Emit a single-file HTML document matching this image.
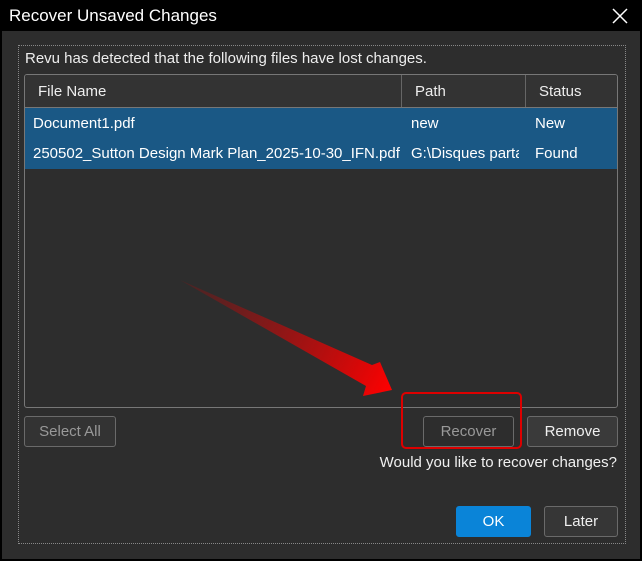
<!DOCTYPE html>
<html><head><style>
body{margin:0;width:642px;height:561px;background:#000;font-family:"Liberation Sans",sans-serif;overflow:hidden;position:relative;color:#eee}
.a{position:absolute}
.body{left:2px;top:31px;width:638px;height:528px;background:#2d2d2d}
.btn{position:absolute;box-sizing:border-box;border:1px solid #6a6a6a;border-radius:3px;background:#333;font-size:15px;text-align:center;line-height:30px;color:#f0f0f0}
</style></head><body>
<div class="a" style="left:9px;top:6px;font-size:17px;color:#fff">Recover Unsaved Changes</div>
<svg class="a" style="left:612px;top:8px" width="16" height="16"><path d="M1 1L15 15M15 1L1 15" stroke="#fff" stroke-width="1.5"/></svg>
<div class="a body"></div>
<div class="a" style="left:18px;top:45px;width:606px;height:497px;border:1px dotted #888"></div>
<div class="a" style="left:25px;top:50px;font-size:15px;color:#eee">Revu has detected that the following files have lost changes.</div>
<div class="a" style="left:24px;top:74px;width:592px;height:332px;border:1px solid #777;border-radius:3px;background:#2d2d2d;overflow:hidden">
 <div class="a" style="left:0;top:0;width:592px;height:32px;background:#333;border-bottom:1px solid #777"></div>
 <div class="a" style="left:376px;top:0;width:1px;height:32px;background:#666"></div>
 <div class="a" style="left:500px;top:0;width:1px;height:32px;background:#666"></div>
 <div class="a" style="left:13px;top:8px;font-size:15px">File Name</div>
 <div class="a" style="left:390px;top:8px;font-size:15px">Path</div>
 <div class="a" style="left:514px;top:8px;font-size:15px">Status</div>
 <div class="a" style="left:0;top:33px;width:592px;height:61px;background:#1a5885"></div>
 <div class="a" style="left:8px;top:40px;font-size:15px;color:#fff">Document1.pdf</div>
 <div class="a" style="left:386px;top:40px;font-size:15px;color:#fff">new</div>
 <div class="a" style="left:510px;top:40px;font-size:15px;color:#fff">New</div>
 <div class="a" style="left:8px;top:70px;font-size:15px;color:#fff">250502_Sutton Design Mark Plan_2025-10-30_IFN.pdf</div>
 <div class="a" style="left:386px;top:70px;width:108px;overflow:hidden;white-space:nowrap;font-size:15px;color:#fff">G:\Disques partagés</div>
 <div class="a" style="left:510px;top:70px;font-size:15px;color:#fff">Found</div>
</div>
<svg class="a" style="left:0;top:0" width="642" height="561"><defs><linearGradient id="g" x1="180" y1="280" x2="392" y2="390" gradientUnits="userSpaceOnUse"><stop offset="0" stop-color="#5a1f1f" stop-opacity="0.6"/><stop offset="1" stop-color="#f00"/></linearGradient></defs>
<polygon points="180,280 372,365 380,362 392,390 363,396 366,386" fill="url(#g)"/></svg>
<div class="btn" style="left:24px;top:416px;width:92px;height:31px;color:#999">Select All</div>
<div class="btn" style="left:423px;top:416px;width:91px;height:31px;color:#999;background:#2d2d2d">Recover</div>
<div class="btn" style="left:527px;top:416px;width:91px;height:31px;background:#3a3a3a">Remove</div>
<div class="a" style="left:401px;top:392px;width:121px;height:57px;border:2px solid #d00;border-radius:5px;box-sizing:border-box"></div>
<div class="a" style="left:300px;top:454px;width:317px;text-align:right;font-size:15px;color:#f0f0f0">Would you like to recover changes?</div>
<div class="btn" style="left:456px;top:506px;width:75px;height:31px;background:#0a84d8;border-color:#0a84d8;color:#fff">OK</div>
<div class="btn" style="left:544px;top:506px;width:74px;height:31px;background:#363636">Later</div>
</body></html>
